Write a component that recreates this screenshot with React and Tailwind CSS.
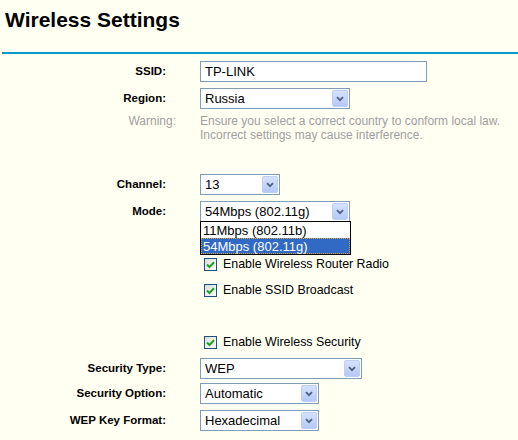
import React from 'react';

const Arrow = () => (
  <span className="flex h-[17px] w-[16px] items-center justify-center rounded-[2px] border border-[#bccdf6] bg-gradient-to-b from-[#d6e2fd] to-[#b4c9f6]">
    <svg width="8" height="6" viewBox="0 0 8 6">
      <path d="M1 1.2 L4 4.2 L7 1.2" fill="none" stroke="#4d6185" strokeWidth="1.8" />
    </svg>
  </span>
);

const Select = ({ value, className = '', children }) => (
  <div className={`relative flex h-[21px] items-center border border-[#7f9db9] bg-white pr-[1px] ${className}`}>
    <span className="flex-1 pl-[4px] text-[13px] leading-none text-black">{value}</span>
    <Arrow />
    {children}
  </div>
);

const Row = ({ label, className = '', children }) => (
  <div className={`flex h-[21px] items-center ${className}`}>
    <div className="w-[166px] text-right text-[11.5px] font-bold text-black">{label}</div>
    <div className="ml-[34px] flex items-center">{children}</div>
  </div>
);

const Check = ({ label, className = '' }) => (
  <div className={`flex h-[13px] items-center pl-[204px] ${className}`}>
    <span className="flex h-[13px] w-[13px] items-center justify-center border border-[#1c5180] bg-gradient-to-br from-[#dcdcd7] to-white">
      <svg width="9" height="8" viewBox="0 0 9 8">
        <path d="M1 3.5 L3.5 6 L8 1.2" fill="none" stroke="#21a121" strokeWidth="2" />
      </svg>
    </span>
    <span className="ml-[6px] text-[12.4px] leading-none text-black">{label}</span>
  </div>
);

export default function App() {
  return (
    <div className="h-[440px] w-[518px] overflow-hidden bg-[#fffff2] font-['Liberation_Sans',Arial,sans-serif]">
      <h1 className="pl-[5px] pt-[8px] text-[21px] font-bold leading-[24px] text-black">Wireless Settings</h1>
      <div className="ml-[2px] mt-[20px] h-[2px] bg-[#0099cc]"></div>

      <Row label="SSID:" className="mt-[7px]">
        <div className="flex h-[21px] w-[227px] items-center border border-[#7f9db9] bg-white pl-[4px] text-[13px] leading-none">TP-LINK</div>
      </Row>
      <Row label="Region:" className="mt-[6px]">
        <Select value="Russia" className="w-[150px]" />
      </Row>
      <div className="mt-[5px] flex text-[12px] leading-[14px] text-[#a0a0a0]">
        <div className="w-[176px] text-right">Warning:</div>
        <div className="ml-[24px]">
          <div>Ensure you select a correct country to conform local law.</div>
          <div>Incorrect settings may cause interference.</div>
        </div>
      </div>

      <Row label="Channel:" className="mt-[32px]">
        <Select value="13" className="w-[80px]" />
      </Row>
      <Row label="Mode:" className="relative z-10 mt-[6px]">
        <Select value="54Mbps (802.11g)" className="w-[150px]">
          <div className="absolute left-[-1px] top-[19px] w-[151px] border border-black bg-white text-[13px] leading-none">
            <div className="flex h-[16px] items-center pl-[2px] text-black">11Mbps (802.11b)</div>
            <div className="flex h-[16px] items-center border border-dotted border-[#d9a53a] bg-[#316ac5] pl-[1px] text-white">54Mbps (802.11g)</div>
          </div>
        </Select>
      </Row>

      <Check label="Enable Wireless Router Radio" className="mt-[36px]" />
      <Check label="Enable SSID Broadcast" className="mt-[13px]" />
      <Check label="Enable Wireless Security" className="mt-[39px]" />

      <Row label="Security Type:" className="mt-[9px]">
        <Select value="WEP" className="w-[162px]" />
      </Row>
      <Row label="Security Option:" className="mt-[4px]">
        <Select value="Automatic" className="w-[119px]" />
      </Row>
      <Row label="WEP Key Format:" className="mt-[6px]">
        <Select value="Hexadecimal" className="w-[119px]" />
      </Row>
    </div>
  );
}
